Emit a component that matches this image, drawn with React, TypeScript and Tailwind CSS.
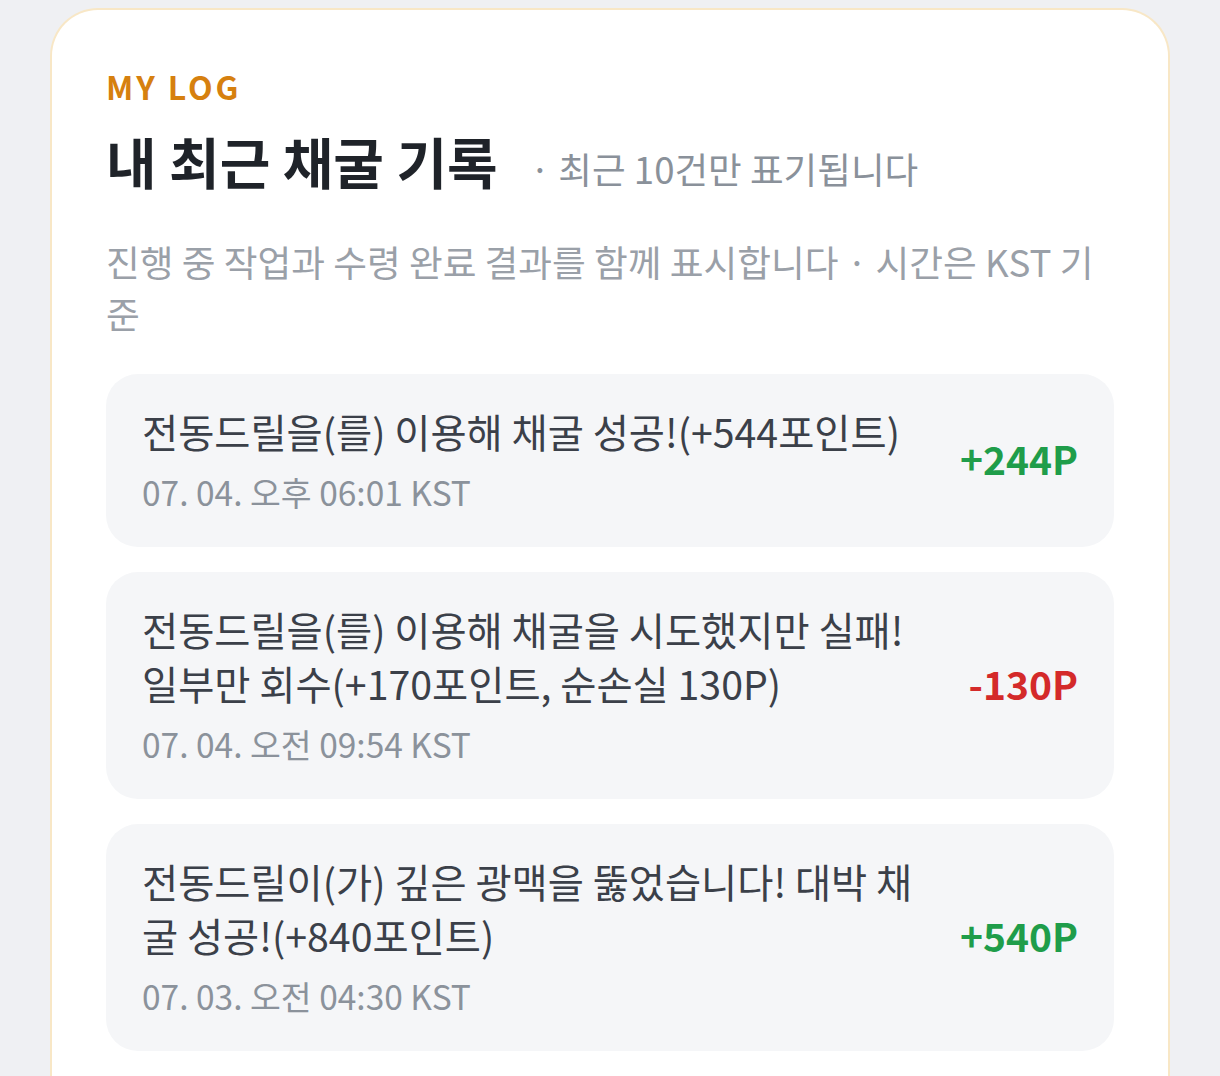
const logs = [
  {
    text: "전동드릴을(를) 이용해 채굴 성공!(+544포인트)",
    time: "07. 04. 오후 06:01 KST",
    amount: "+244P",
    gain: true,
  },
  {
    text: "전동드릴을(를) 이용해 채굴을 시도했지만 실패! 일부만 회수(+170포인트, 순손실 130P)",
    time: "07. 04. 오전 09:54 KST",
    amount: "-130P",
    gain: false,
  },
  {
    text: "전동드릴이(가) 깊은 광맥을 뚫었습니다! 대박 채굴 성공!(+840포인트)",
    time: "07. 03. 오전 04:30 KST",
    amount: "+540P",
    gain: true,
  },
];

export default function App() {
  return (
    <div
      className="h-[1076px] overflow-hidden bg-[#eff0f3] px-[50px] pt-2"
      style={{ fontFamily: '"Noto Sans CJK KR", "Noto Sans", sans-serif' }}
    >
      <div className="rounded-t-[48px] border-2 border-b-0 border-[#f8e7c6] bg-white px-[54px] pt-[56px] pb-24">
        <p className="text-[32px] font-bold leading-[40px] tracking-[0.09em] text-[#d6800f]">MY LOG</p>
        <div className="mt-[22px] flex items-baseline gap-8">
          <h2 className="text-[55px] font-bold leading-[64px] text-[#1f2329]">내 최근 채굴 기록</h2>
          <span className="text-[36.6px] text-[#8a919a]">· 최근 10건만 표기됩니다</span>
        </div>
        <p className="mt-[38px] text-[36.7px] leading-[52px] text-[#9aa0a8]">
          진행 중 작업과 수령 완료 결과를 함께 표시합니다 · 시간은 KST 기준
        </p>
        <div className="mt-[35px] flex flex-col gap-[25px]">
          {logs.map((log, i) => (
            <div key={i} className="flex items-center gap-10 rounded-[32px] bg-[#f5f6f8] px-9 pt-[30px] pb-[34px]">
              <div className="min-w-0 flex-1">
                <p className="text-[39.3px] leading-[54px] text-[#3b4049]">{log.text}</p>
                <p className="mt-[13px] text-[33.5px] leading-[42px] text-[#8b929b]">{log.time}</p>
              </div>
              <span
                className={`text-[39px] font-bold ${log.gain ? "text-[#1f9d4a]" : "text-[#d42a2a]"}`}
              >
                {log.amount}
              </span>
            </div>
          ))}
        </div>
      </div>
    </div>
  );
}
